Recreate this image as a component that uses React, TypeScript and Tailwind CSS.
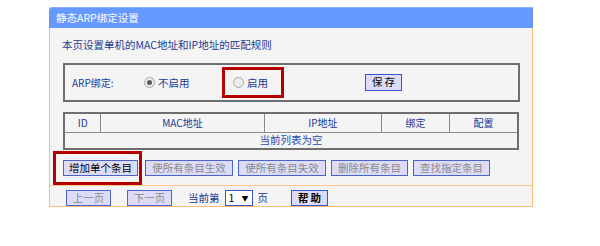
import React from "react";

function Radio({ checked }: { checked?: boolean }) {
  return (
    <span className="w-[11px] h-[11px] rounded-full border border-[#a8a8a8] bg-[#ececec] flex items-center justify-center shrink-0">
      {checked && <span className="w-[5px] h-[5px] rounded-full bg-[#5a5a5a]" />}
    </span>
  );
}

function Btn({ w, children, disabled, bold }: { w: string; children: React.ReactNode; disabled?: boolean; bold?: boolean }) {
  return (
    <div
      className={`${w} h-[16px] flex items-center justify-center border border-[#4a64c8] bg-[#dcdcf8] leading-none ${
        disabled ? "text-[#8a8a8a]" : "text-black"
      } ${bold ? "font-bold" : ""}`}
    >
      {children}
    </div>
  );
}

export default function App() {
  return (
    <div className="w-[600px] h-[246px] bg-white pt-[7px] pl-[49px] font-['Noto_Sans_CJK_SC',sans-serif] text-[10.5px]">
      <div className="w-[484px]">
        <div className="h-[21px] bg-[#6699ff] border-t border-[#8aaeff] rounded-tl-[3px] pl-[7px] flex items-center text-white leading-none">
          静态ARP绑定设置
        </div>
        <div className="bg-[#f4f4f4] border-x border-b border-[#ffbb77] h-[179px] flex flex-col">
          <div className="pl-[12px] pt-[10px] h-[35px] leading-[14px] text-[#1c3a94]">
            本页设置单机的MAC地址和IP地址的匹配规则
          </div>
          <div className="ml-[13px] mr-[12px] h-[39px] border-2 border-[#6e6e6e] flex items-center">
            <div className="w-[79px] pl-[7px] text-[#1c3a94] text-[10px]">ARP绑定:</div>
            <div className="w-[78px] flex items-center gap-[3px] text-[#1c3a94]">
              <Radio checked />
              <span>不启用</span>
            </div>
            <div className="w-[62px] h-[31px] border-[3px] border-[#b40000] flex items-center pl-[8px] gap-[3px] text-[#1c3a94]">
              <Radio />
              <span>启用</span>
            </div>
            <div className="ml-[81px]">
              <div className="w-[37px] h-[17px] flex items-center justify-center border border-[#3a55c8] bg-[#dcdcf8] text-black leading-none tracking-[2px] pl-[2px]">
                保存
              </div>
            </div>
          </div>
          <table className="mt-[10px] ml-[13px] w-[456px] border-collapse border-2 border-[#6e6e6e] text-[#1c3a94] text-[10px]">
            <tbody>
              <tr className="h-[19px]">
                <td className="w-[37px] border border-[#8a8a8a] text-center p-0 leading-none">ID</td>
                <td className="w-[164px] border border-[#8a8a8a] text-center p-0 leading-none">MAC地址</td>
                <td className="w-[118px] border border-[#8a8a8a] text-center p-0 leading-none">IP地址</td>
                <td className="w-[68px] border border-[#8a8a8a] text-center p-0 leading-none">绑定</td>
                <td className="w-[69px] border border-[#8a8a8a] text-center p-0 leading-none">配置</td>
              </tr>
              <tr className="h-[17px]">
                <td colSpan={5} className="border border-[#8a8a8a] text-center p-0 leading-none text-[#2a4cb4] text-[10.5px]">
                  当前列表为空
                </td>
              </tr>
            </tbody>
          </table>
          <div className="mt-[10px] ml-[13px] flex gap-[5px]">
            <div className="relative mr-[2px]">
              <Btn w="w-[75px]">增加单个条目</Btn>
              <span className="absolute left-[-10px] top-[-9px] w-[89px] h-[34px] border-[3px] border-[#b40000]" />
            </div>
            <Btn w="w-[88px]" disabled>使所有条目生效</Btn>
            <Btn w="w-[88px]" disabled>使所有条目失效</Btn>
            <Btn w="w-[77px]" disabled>删除所有条目</Btn>
            <Btn w="w-[77px]" disabled>查找指定条目</Btn>
          </div>
          <div className="mt-[9px] border-t border-[#ffc68c]" />
          <div className="mt-[4px] pl-[16px] flex items-center text-[#1c3a94]">
            <Btn w="w-[45px]" disabled>上一页</Btn>
            <div className="ml-[16px]">
              <Btn w="w-[45px]" disabled>下一页</Btn>
            </div>
            <span className="ml-[16px] leading-none">当前第</span>
            <div className="ml-[5px] w-[28px] h-[16px] bg-white border border-[#3a55c8] flex items-center justify-between px-[3px] text-black leading-none">
              <span>1</span>
              <span className="text-[7px]">▼</span>
            </div>
            <span className="ml-[5px] leading-none">页</span>
            <div className="ml-[23px]">
              <div className="w-[37px] h-[16px] flex items-center justify-center border border-[#3a55c8] bg-[#dcdcf8] text-black leading-none tracking-[2px] pl-[2px] font-bold">
                帮助
              </div>
            </div>
          </div>
        </div>
      </div>
    </div>
  );
}
